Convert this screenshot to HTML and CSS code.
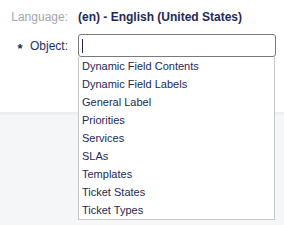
FILE: index.html
```html
<!DOCTYPE html>
<html>
<head>
<meta charset="utf-8">
<link rel="stylesheet" href="styles.css">
</head>
<body>
<div class="panel">
  <div class="row">
    <div class="label muted">Language:</div>
    <div class="value strong">(en) - English (United States)</div>
  </div>
  <div class="row row-input">
    <div class="label required"><span class="star">*</span> Object:</div>
    <div class="field">
      <div class="input"><span class="caret"></span></div>
      <ul class="menu">
        <li>Dynamic Field Contents</li>
        <li>Dynamic Field Labels</li>
        <li>General Label</li>
        <li>Priorities</li>
        <li>Services</li>
        <li>SLAs</li>
        <li>Templates</li>
        <li>Ticket States</li>
        <li>Ticket Types</li>
      </ul>
    </div>
  </div>
</div>
</body>
</html>
```
FILE: styles.css
```css
html, body {
  margin: 0;
  padding: 0;
}
body {
  background: #f5f6f8;
  font-family: "Liberation Sans", Arial, sans-serif;
  font-size: 12px;
  color: #1e2a56;
  width: 284px;
  height: 225px;
  overflow: hidden;
}
.panel {
  background: #fff;
  height: 102px;
  padding-top: 10px;
  box-shadow: 0 1px 2px rgba(0, 0, 0, 0.06);
  border-bottom: 1px solid #eceef2;
}
.row {
  display: grid;
  grid-template-columns: 68px 198px;
  column-gap: 10px;
  align-items: center;
}
.row-input {
  margin-top: 10px;
}
.label {
  text-align: right;
  line-height: 14px;
}
.muted {
  color: #a3a7b0;
}
.strong {
  font-weight: bold;
  line-height: 14px;
  color: #1e2a56;
}
.required {
  color: #23306a;
}
.star {
  font-weight: bold;
  font-size: 13px;
  position: relative;
  top: 3px;
  margin-right: 4px;
  color: #1e2a56;
}
.field {
  position: relative;
}
.input {
  box-sizing: border-box;
  height: 23px;
  border: 1px solid #7a7a7a;
  border-radius: 3px;
  background: #fff;
  display: flex;
  align-items: center;
  padding-left: 3px;
}
.caret {
  display: block;
  width: 1px;
  height: 14px;
  background: #1e2a56;
}
.menu {
  position: absolute;
  left: 0;
  top: 23px;
  box-sizing: border-box;
  width: 197px;
  margin: 0;
  padding: 0;
  list-style: none;
  background: #fff;
  border: 1px solid #c8c8c8;
  border-top: none;
  font-size: 11px;
}
.menu li {
  line-height: 18px;
  height: 18px;
  padding-left: 3px;
  color: #1e2a56;
}
```
